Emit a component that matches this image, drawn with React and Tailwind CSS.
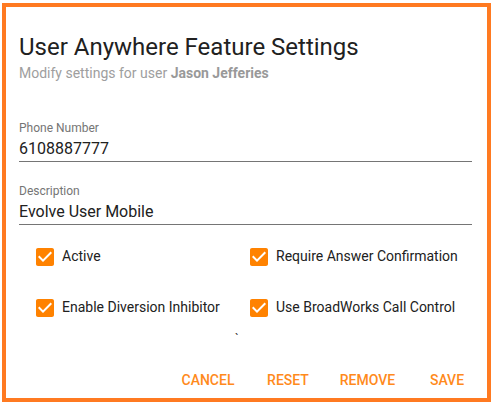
import React from 'react';

const CheckIcon = () => (
  <svg viewBox="0 0 24 24" className="w-6 h-6 shrink-0" fill="#ff8200">
    <path d="M19 3H5c-1.11 0-2 .9-2 2v14c0 1.1.89 2 2 2h14c1.11 0 2-.9 2-2V5c0-1.1-.89-2-2-2zm-9 14l-5-5 1.41-1.41L10 14.17l7.59-7.59L19 8l-9 9z" />
  </svg>
);

function Field({ label, value, className }) {
  return (
    <div className={`mr-[15px] ${className}`}>
      <div className="text-[12px] leading-[16px] text-[#757575]">{label}</div>
      <div className="text-[16px] leading-[25px] text-[#212121] border-b border-[#757575]">{value}</div>
    </div>
  );
}

function Option({ label }) {
  return (
    <div className="h-[51px] flex items-center">
      <CheckIcon />
      <span className="ml-[5px] text-[14px] text-[#212121]">{label}</span>
    </div>
  );
}

export default function App() {
  const options = [
    'Active',
    'Require Answer Confirmation',
    'Enable Diversion Inhibitor',
    'Use BroadWorks Call Control',
  ];

  return (
    <div className="w-[493px] h-[404px] bg-white pt-[3px] pl-[2px]" style={{ fontFamily: 'Roboto, "Liberation Sans", sans-serif' }}>
      <div className="w-[489px] h-[399px] border-4 border-[#ff7a21] bg-white">
        <div className="pl-[13px] pt-[24px]">
          <h1 className="text-[24px] leading-[32px] text-[#212121]">User Anywhere Feature Settings</h1>
          <p className="text-[14px] leading-[20px] text-[#9e9e9e]">
            Modify settings for user <span className="font-bold text-[#999999]">Jason Jefferies</span>
          </p>
          <Field label="Phone Number" value="6108887777" className="mt-[37px]" />
          <Field label="Description" value="Evolve User Mobile" className="mt-[21px]" />
        </div>

        <div className="grid grid-cols-[214px_1fr] pl-[27px] mt-[6px]">
          {options.map((o) => (
            <Option key={o} label={o} />
          ))}
        </div>

        <div className="pl-[229px] text-[12px] leading-[12px] text-[#333]">`</div>

        <div className="flex justify-end pr-[8px] mt-[17px] text-[14px] font-medium text-[#ff8a1c] leading-[36px]">
          <button className="w-[84px] text-center">CANCEL</button>
          <button className="w-[72px] ml-[2px] text-center">RESET</button>
          <button className="w-[87px] text-center">REMOVE</button>
          <button className="w-[64px] ml-[4px] text-center">SAVE</button>
        </div>
      </div>
    </div>
  );
}
